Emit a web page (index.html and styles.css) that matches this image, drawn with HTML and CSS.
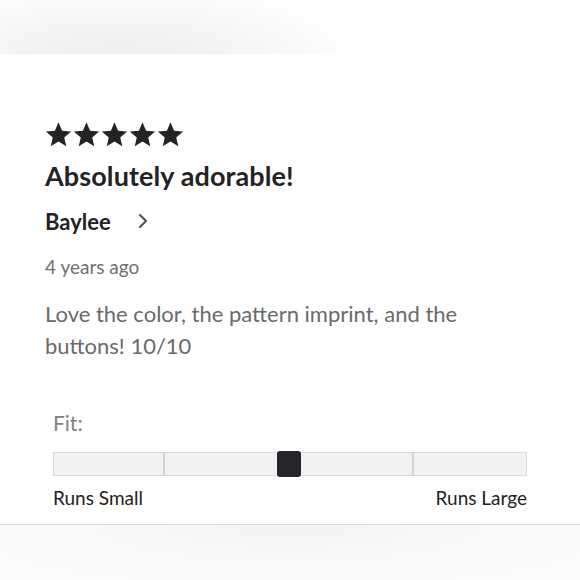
FILE: index.html
```html
<!DOCTYPE html>
<html>
<head>
<meta charset="utf-8">
<link rel="stylesheet" href="styles.css">
</head>
<body>
<div class="page">
  <div class="top-band"></div>
  <div class="review">
    <div class="stars">
      <svg class="star" viewBox="0 0 24 24"><path d="M12 1.2l3.2 7.4 8 .7-6.1 5.3 1.8 7.9L12 18.3 5.1 22.5l1.8-7.9L.8 9.3l8-.7z"/></svg>
      <svg class="star" viewBox="0 0 24 24"><path d="M12 1.2l3.2 7.4 8 .7-6.1 5.3 1.8 7.9L12 18.3 5.1 22.5l1.8-7.9L.8 9.3l8-.7z"/></svg>
      <svg class="star" viewBox="0 0 24 24"><path d="M12 1.2l3.2 7.4 8 .7-6.1 5.3 1.8 7.9L12 18.3 5.1 22.5l1.8-7.9L.8 9.3l8-.7z"/></svg>
      <svg class="star" viewBox="0 0 24 24"><path d="M12 1.2l3.2 7.4 8 .7-6.1 5.3 1.8 7.9L12 18.3 5.1 22.5l1.8-7.9L.8 9.3l8-.7z"/></svg>
      <svg class="star" viewBox="0 0 24 24"><path d="M12 1.2l3.2 7.4 8 .7-6.1 5.3 1.8 7.9L12 18.3 5.1 22.5l1.8-7.9L.8 9.3l8-.7z"/></svg>
    </div>
    <h1 class="title">Absolutely adorable!</h1>
    <div class="author">
      <span class="name">Baylee</span>
      <svg class="chev" viewBox="0 0 12 16"><path d="M3 2l6 6-6 6" fill="none" stroke="#555" stroke-width="2.2" stroke-linecap="round" stroke-linejoin="round"/></svg>
    </div>
    <div class="date">4 years ago</div>
    <p class="body">Love the color, the pattern imprint, and the buttons! 10/10</p>
    <div class="fit">
      <div class="fit-label">Fit:</div>
      <div class="bar">
        <div class="seg seg-a"></div>
        <div class="seg seg-b"><div class="knob"></div></div>
        <div class="seg seg-c"></div>
      </div>
      <div class="ends"><span>Runs Small</span><span>Runs Large</span></div>
    </div>
  </div>
  <div class="bottom-band"></div>
</div>
</body>
</html>
```
FILE: styles.css
```css
html, body { margin: 0; padding: 0; background: #fff; }
.page { width: 580px; height: 580px; overflow: hidden; display: flex; flex-direction: column; font-family: Lato, "Noto Sans", sans-serif; color: #222; }
.top-band { height: 54px; flex: none; background: radial-gradient(ellipse 250px 80px at 120px 60px, #eeeeee 0%, #f5f5f5 50%, #ffffff 100%); }
.review { flex: none; height: 471px; padding-left: 45px; padding-right: 53px; box-sizing: border-box; border-bottom: 1px solid #dcdcdc; display: flex; flex-direction: column; }
.stars { display: flex; gap: 1px; margin-top: 67px; height: 27px; }
.star { width: 27px; height: 27px; fill: #232326; }
.title { margin: 12px 0 0; font-size: 27px; font-weight: 700; line-height: 32px; color: #232326; letter-spacing: 0.1px; }
.author { display: flex; align-items: center; margin-top: 14px; height: 30px; }
.name { font-size: 22px; font-weight: 700; color: #232326; }
.chev { width: 12px; height: 16px; margin-left: 26px; }
.date { margin-top: 19px; font-size: 19px; line-height: 24px; color: #707070; }
.body { margin: 19px 0 0; font-size: 22px; line-height: 32px; color: #6a6a6a; }
.fit { margin-top: 48px; padding-left: 8px; display: flex; flex-direction: column; }
.fit-label { font-size: 21px; line-height: 26px; color: #808080; }
.bar { display: flex; margin-top: 16px; height: 24px; box-sizing: border-box; border: 1px solid #dadada; background: #f2f2f2; }
.seg { height: 100%; box-sizing: border-box; }
.seg-a { width: 111px; border-right: 2px solid #d4d4d4; }
.seg-b { flex: 1; border-right: 2px solid #d4d4d4; display: flex; justify-content: center; align-items: center; }
.seg-c { width: 112px; }
.knob { width: 24px; height: 26px; background: #25262a; border-radius: 3px; }
.ends { display: flex; justify-content: space-between; margin-top: 10px; font-size: 19px; line-height: 24px; color: #222; }
.bottom-band { flex: 1; background: radial-gradient(ellipse 320px 60px at 290px 0px, #f3f3f3 0%, #f9f9f9 60%, #fbfbfb 100%); }
```
